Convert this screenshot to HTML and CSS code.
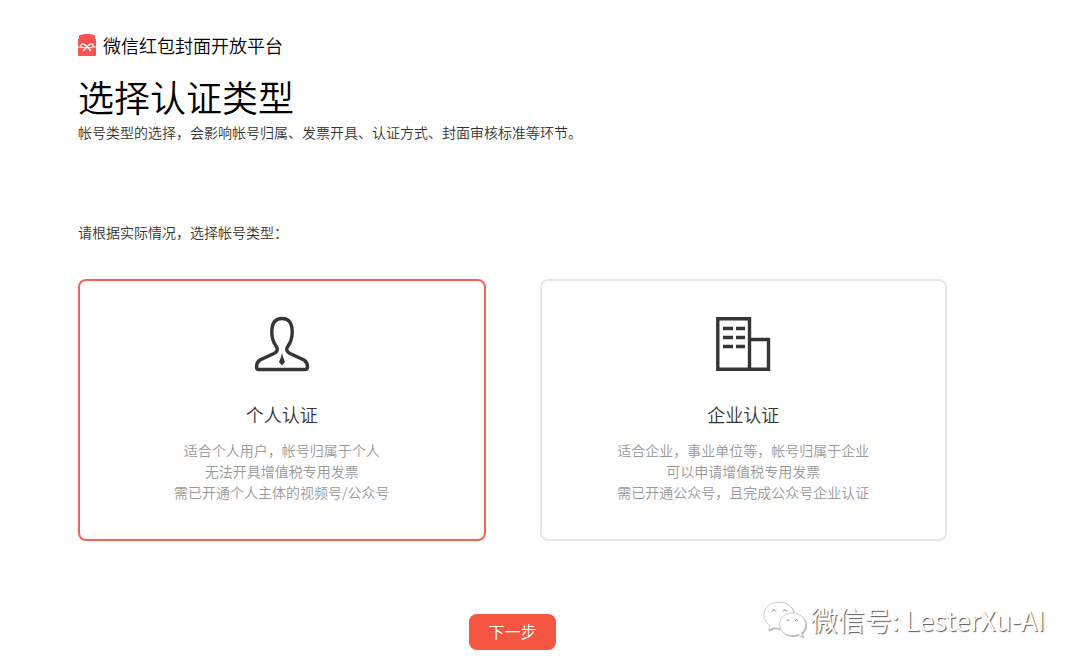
FILE: index.html
```html
<!DOCTYPE html>
<html lang="zh-CN">
<head>
<meta charset="utf-8">
<meta name="viewport" content="width=device-width, initial-scale=1">
<title>微信红包封面开放平台</title>
<link rel="stylesheet" href="styles.css">
</head>
<body>
<div class="page">
  <header class="header">
    <div class="brand">
      <svg class="brand-logo" viewBox="0 0 18 22" aria-hidden="true">
        <path d="M1 5 V2 Q1 1 2 1 Q9 -1 16 1 Q17 1 17 2 V5 Z" fill="#fa5151"/>
        <path d="M0 5 H18 V21 Q18 22 17 22 H1 Q0 22 0 21 Z" fill="#fa5151"/>
        <path d="M0 13 H3 M15 13 H18 M9 13 C7 10 4 9 3 11 C2 14 6 14 9 13 C12 14 16 14 15 11 C14 9 11 10 9 13 L5 17 M9 13 L13 17" fill="none" stroke="#fff" stroke-width="1.2"/>
      </svg>
      <span>微信红包封面开放平台</span>
    </div>
    <h1 class="title">选择认证类型</h1>
    <p class="subtitle">帐号类型的选择，会影响帐号归属、发票开具、认证方式、封面审核标准等环节。</p>
  </header>
  <form class="form">
    <fieldset class="choices">
      <legend class="prompt">请根据实际情况，选择帐号类型：</legend>
      <div class="cards">
        <label class="card">
          <input class="card-radio" type="radio" name="type" value="personal" checked>
          <svg class="card-icon" viewBox="0 0 56 56" aria-hidden="true">
            <path d="M28 2.500 C20.500 2.500 17.800 8 17.800 16 C17.800 22 19 26 22 30 C24 33 24 35.500 20 37.500 L6 44 C3 46 2.500 48 2.500 51 Q2.500 53.500 5 53.500 H51 Q53.500 53.500 53.500 51 C53.500 48 53 46 50 44 L36 37.500 C32 35.500 32 33 34 30 C37 26 38.200 22 38.200 16 C38.200 8 35.500 2.500 28 2.500 Z" fill="none" stroke="#353535" stroke-width="3.400"/>
            <path d="M28 37 L29 41 L31 46 L28 49.500 L25 46 L27 41 Z" fill="#353535"/>
          </svg>
          <span class="card-title">个人认证</span>
          <span class="card-text">适合个人用户，帐号归属于个人<br>无法开具增值税专用发票<br>需已开通个人主体的视频号/公众号</span>
        </label>
        <label class="card">
          <input class="card-radio" type="radio" name="type" value="company">
          <svg class="card-icon" viewBox="0 0 56 56" aria-hidden="true">
            <path d="M2.800 2.800 H34.500 V53.200 H2.800 Z M34.500 23.500 H53.500 V53.200 H34.500" fill="none" stroke="#353535" stroke-width="3.400"/>
            <path d="M8 12.500 H18 M21 12.500 H30 M8 21.500 H18 M21 21.500 H30 M8 30.500 H18 M21 30.500 H30" stroke="#353535" stroke-width="3.400"/>
          </svg>
          <span class="card-title">企业认证</span>
          <span class="card-text">适合企业，事业单位等，帐号归属于企业<br>可以申请增值税专用发票<br>需已开通公众号，且完成公众号企业认证</span>
        </label>
      </div>
    </fieldset>
    <button class="next" type="button">下一步</button>
  </form>
</div>
<div class="watermark">
  <svg class="watermark-logo" viewBox="0 0 44 38" aria-hidden="true">
    <path class="bubble" d="M16 1 C7 1 1 7 1 14 C1 18.500 3 22 7 25 L5.500 29 L11 26.500 C14 27.500 17 27.500 20 27 C27 26 31 20 31 14 C31 7 25 1 16 1 Z"/>
    <path class="bubble" d="M29 12 C22 12 16.500 17 16.500 23 C16.500 30 22 34.500 29 34.500 C31.500 34.500 33.500 34 35 33.500 L39.500 36 L38.500 32 C41 30 42.500 27 42.500 23 C42.500 17 36.500 12 29 12 Z"/>
    <path d="M9 10.500 Q11 7 13 10.500 M20 10.500 Q22 7 24 10.500 M23.500 20 Q25 17 26.500 20 M32 20 Q33.500 17 35 20" fill="none" stroke="#8c8c8c"/>
  </svg>
  <span>微信号: LesterXu-AI</span>
</div>
</body>
</html>
```
FILE: styles.css
```css
* {
  box-sizing: border-box;
}

body {
  margin: 0;
  background: #fff;
  color: #353535;
  font-family: "Noto Sans CJK SC", sans-serif;
  font-size: 14px;
  font-weight: 350;
  line-height: 20px;
}

.page {
  padding: 33px 133px 18px 78px;
}

.brand {
  display: flex;
  align-items: center;
  gap: 7px;
  color: #000;
  font-size: 18px;
  line-height: 24px;
}

.brand-logo {
  width: 18px;
  height: 22px;
}

.title {
  margin: 15px 0 0;
  color: #000;
  font-size: 36px;
  font-weight: 350;
  line-height: 48px;
}

.subtitle {
  margin: 2px 0 0;
}

.form {
  display: flex;
  flex-direction: column;
  align-items: center;
  gap: 73px;
  margin-top: 80px;
}

.choices {
  width: 100%;
  margin: 0;
  padding: 0;
  border: 0;
}

.prompt {
  padding: 0;
}

.cards {
  display: grid;
  grid-template-columns: 1fr 1fr;
  gap: 54px;
  margin-top: 37px;
}

.card {
  display: flex;
  flex-direction: column;
  align-items: center;
  padding: 35px 20px 36px;
  border: 2px solid #e6e6e6;
  border-radius: 8px;
  text-align: center;
  cursor: pointer;
}

.card:has(:checked) {
  border-color: #f56354;
}

.card-radio {
  position: absolute;
  opacity: 0;
}

.card-icon {
  width: 56px;
  height: 56px;
}

.card-title {
  margin-top: 28px;
  font-size: 18px;
  line-height: 28px;
}

.card-text {
  margin-top: 12px;
  color: #999;
  line-height: 21px;
}

.next {
  padding: 5px 19px 7px;
  border: 0;
  border-radius: 8px;
  background: #f55642;
  color: #fff;
  font: inherit;
  font-size: 16px;
  line-height: 24px;
}

.watermark {
  position: absolute;
  right: 35px;
  bottom: 29px;
  display: flex;
  align-items: center;
  gap: 4px;
  color: #fff;
  font-size: 27px;
  line-height: 38px;
  text-shadow: 1px 1px 1px #555;
}

.watermark-logo {
  width: 44px;
  height: 38px;
  overflow: visible;
}

.bubble {
  fill: #fff;
  stroke: #ccc;
  filter: drop-shadow(1px 1px 0 #b4b4b4);
}
```
